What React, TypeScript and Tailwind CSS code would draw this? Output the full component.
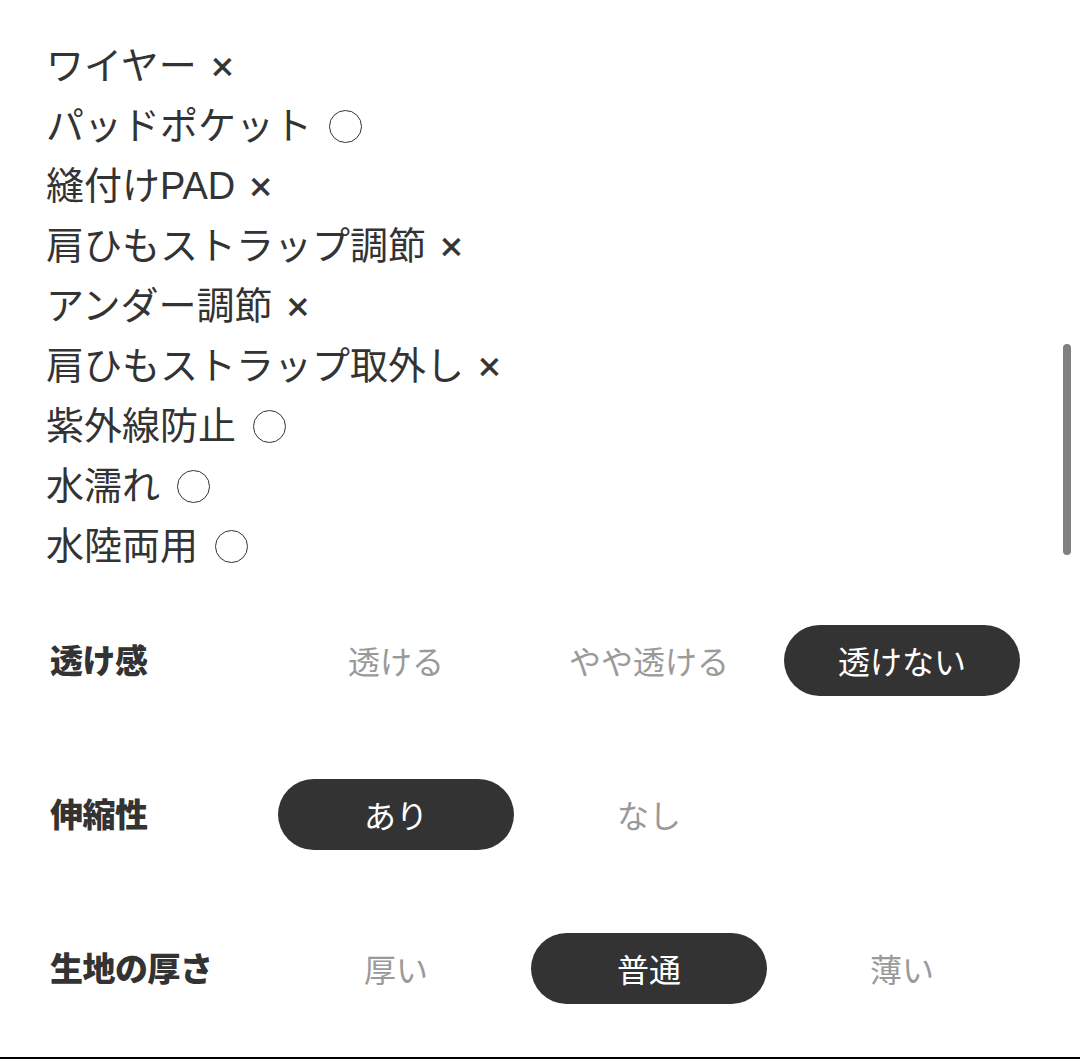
const features: { name: string; ok: boolean }[] = [
  { name: 'ワイヤー', ok: false },
  { name: 'パッドポケット', ok: true },
  { name: '縫付けPAD', ok: false },
  { name: '肩ひもストラップ調節', ok: false },
  { name: 'アンダー調節', ok: false },
  { name: '肩ひもストラップ取外し', ok: false },
  { name: '紫外線防止', ok: true },
  { name: '水濡れ', ok: true },
  { name: '水陸両用', ok: true },
];

const options: { label: string; choices: string[]; selected: number }[] = [
  { label: '透け感', choices: ['透ける', 'やや透ける', '透けない'], selected: 2 },
  { label: '伸縮性', choices: ['あり', 'なし'], selected: 0 },
  { label: '生地の厚さ', choices: ['厚い', '普通', '薄い'], selected: 1 },
];

function OptionRow({ label, choices, selected }: { label: string; choices: string[]; selected: number }) {
  return (
    <div className="h-[154px] flex items-center">
      <div className="w-[228px] shrink-0 text-[33px] font-black text-[#333333] tracking-[-0.5px]">{label}</div>
      <div className="flex gap-[17px]">
        {choices.map((c, i) => (
          <div
            key={c}
            className={`w-[236px] h-[71px] rounded-full flex items-center justify-center text-[32px] ${
              i === selected ? 'bg-[#333333] text-white' : 'text-[#9a9a9a]'
            }`}
          >
            {c}
          </div>
        ))}
      </div>
    </div>
  );
}

export default function App() {
  return (
    <div
      className="relative w-[1080px] h-[1059px] bg-white overflow-hidden text-[#333333]"
      style={{ fontFamily: '"Noto Sans CJK JP", "Noto Sans", sans-serif' }}
    >
      <div className="pt-[36px] pl-[46px]" style={{ fontFamily: '"Liberation Sans", "Noto Sans CJK JP", sans-serif' }}>
        {features.map((f) => (
          <div key={f.name} className="h-[60px] flex items-center text-[38px] leading-none">
            <span>{f.name}</span>
            {f.ok ? (
              <span className="ml-[17px] w-[33px] h-[33px] rounded-full border-[1.5px] border-[#333333]" />
            ) : (
              <span className="ml-[14px] text-[39px] [-webkit-text-stroke:0.6px_#333333]">×</span>
            )}
          </div>
        ))}
      </div>
      <div className="mt-[7px] pl-[50px]">
        {options.map((o) => (
          <OptionRow key={o.label} {...o} />
        ))}
      </div>
      <div className="absolute top-[344px] right-[9px] w-[8px] h-[211px] rounded-full bg-[#808080]" />
      <div className="absolute bottom-0 left-0 right-0 h-[2px] bg-black" />
    </div>
  );
}
